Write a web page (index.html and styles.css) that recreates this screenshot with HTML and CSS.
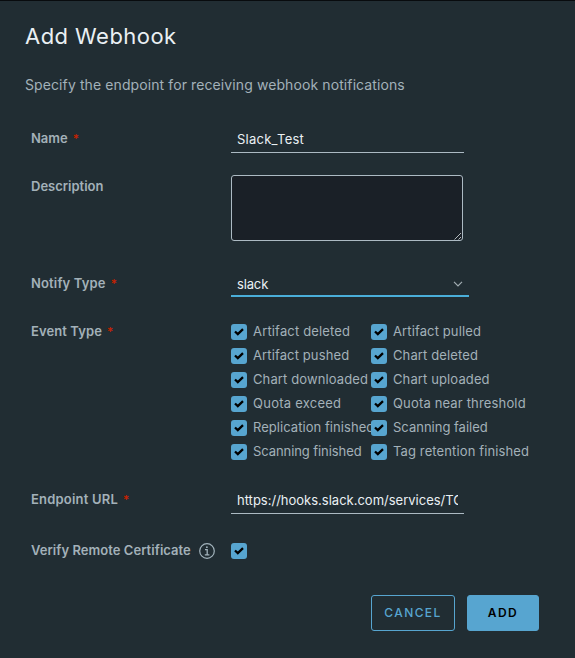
FILE: index.html
```html
<!DOCTYPE html>
<html lang="en">
<head>
<meta charset="utf-8">
<title>Add Webhook</title>
<link rel="stylesheet" href="styles.css">
</head>
<body>
<svg class="defs" width="0" height="0"><symbol id="tick" viewBox="0 0 16 16"><path d="M4 7.5 6.8 10.1 12 5.2" fill="none" stroke="#000" stroke-width="2.3"/></symbol></svg>
<main class="dialog">
  <h1><span class="title">Add Webhook</span></h1>
  <p class="intro"><span>Specify the endpoint for receiving webhook notifications</span></p>
  <form>
    <div class="row name-row">
      <div class="label"><span class="l-name">Name</span><i>*</i></div>
      <div class="input"><span class="v-name">Slack_Test</span></div>
    </div>
    <div class="row desc-row">
      <div class="label"><span class="l-desc">Description</span></div>
      <div class="textarea"><svg width="8" height="8" viewBox="0 0 8 8"><path d="M.5 7.5 7 1M4.5 7.5 7 5" stroke="#c4c9cc" stroke-width=".9"/></svg></div>
    </div>
    <div class="row notify-row">
      <div class="label"><span class="l-notify">Notify Type</span><i>*</i></div>
      <div class="select"><span class="v-slack">slack</span><svg width="10" height="6" viewBox="0 0 10 6"><path d="M1 .8 5 4.8 9 .8" fill="none" stroke="#a2adb2" stroke-width="1.2"/></svg></div>
    </div>
    <div class="row event-row">
      <div class="label"><span class="l-event">Event Type</span><i>*</i></div>
      <div class="events">
        <label><b><svg><use href="#tick"/></svg></b><span class="e1">Artifact deleted</span></label>
        <label><b><svg><use href="#tick"/></svg></b><span class="e2">Artifact pulled</span></label>
        <label><b><svg><use href="#tick"/></svg></b><span class="e3">Artifact pushed</span></label>
        <label><b><svg><use href="#tick"/></svg></b><span class="e4">Chart deleted</span></label>
        <label><b><svg><use href="#tick"/></svg></b><span class="e5">Chart downloaded</span></label>
        <label><b><svg><use href="#tick"/></svg></b><span class="e6">Chart uploaded</span></label>
        <label><b><svg><use href="#tick"/></svg></b><span class="e7">Quota exceed</span></label>
        <label><b><svg><use href="#tick"/></svg></b><span class="e8">Quota near threshold</span></label>
        <label><b><svg><use href="#tick"/></svg></b><span class="e9">Replication finished</span></label>
        <label><b><svg><use href="#tick"/></svg></b><span class="e10">Scanning failed</span></label>
        <label><b><svg><use href="#tick"/></svg></b><span class="e11">Scanning finished</span></label>
        <label><b><svg><use href="#tick"/></svg></b><span class="e12">Tag retention finished</span></label>
      </div>
    </div>
    <div class="row url-row">
      <div class="label"><span class="l-url">Endpoint URL</span><i>*</i></div>
      <div class="input"><span class="v-url">https://hooks.slack.com/services/TC</span></div>
    </div>
    <div class="row verify-row">
      <div class="label"><span class="l-verify">Verify Remote Certificate</span><svg class="info" viewBox="0 0 16 16" fill="none" stroke="#a2b3bc"><circle cx="8" cy="8" r="7.3" stroke-width="1.2"/><path d="M6 6.7h2.2v5M5.8 11.8h4.6" stroke-width="1.3"/><circle cx="7.9" cy="4.2" r=".9" fill="#a2b3bc" stroke="none"/></svg></div>
      <b><svg><use href="#tick"/></svg></b>
    </div>
    <div class="footer">
      <button type="button" class="cancel"><span>CANCEL</span></button>
      <button type="button" class="add"><span>ADD</span></button>
    </div>
  </form>
</main>
</body>
</html>
```
FILE: styles.css
```css
* { box-sizing: border-box; }
body { margin: 0; background: #212d33; color: #a3b1b9; font: 13px/24px Inter, "Liberation Sans", sans-serif; }
.defs { display: none; }
.dialog { height: 658px; padding: 19px 25px 0; border-top: 1px solid #080b0e; overflow: hidden; }
h1 { margin: 0; font-size: 22px; line-height: 32px; font-weight: 400; letter-spacing: .45px; color: #eaf0f3; white-space: nowrap; }
.intro { margin: 21px 0 32px; font-size: 14px; line-height: 24px; letter-spacing: .1px; white-space: nowrap; }
.row { display: grid; grid-template-columns: 200px 1fr; padding-left: 6px; align-items: start; }
.row > * { min-width: 0; }
.label { display: flex; align-items: center; height: 20px; font-weight: 600; white-space: nowrap; }
.label > span { padding-bottom: 2px; }
.label i { margin-left: 5px; font-style: normal; font-weight: 500; font-size: 12px; color: #c92100; }
.l-notify { letter-spacing: .15px; }
.l-event { letter-spacing: .1px; }
.l-url { letter-spacing: .2px; }
.l-verify { letter-spacing: .05px; }
.input { width: 233px; height: 24px; padding: 0 6px; border-bottom: 1px solid #acbac3; color: #eaf0f3; line-height: 21px; overflow: hidden; white-space: nowrap; }
.input span { display: block; overflow: hidden; }
.v-name { letter-spacing: .25px; }
.desc-row { margin-top: 22px; }
.desc-row .label { margin-top: 2px; }
.textarea { display: flex; align-items: flex-end; justify-content: flex-end; width: 232px; height: 66px; border: 1px solid #acbac3; border-radius: 3px; background: #1a2027; }
.notify-row { margin-top: 33px; }
.select { display: flex; justify-content: space-between; align-items: center; width: 238px; height: 23px; padding: 0 6px; border-bottom: 2px solid #4aaed9; color: #eaf0f3; line-height: 20px; }
.select span { padding-bottom: 2px; letter-spacing: -.15px; }
.select svg { margin-top: -2px; }
.event-row { margin-top: 27px; }
.event-row .label { margin-top: -2px; }
.events { display: grid; grid-template-columns: 140px 160px; grid-auto-rows: 24px; margin-top: -4px; }
.events label { display: flex; align-items: center; white-space: nowrap; }
.events span { padding-bottom: 2px; letter-spacing: .12px; }
.events .e1, .events .e8 { letter-spacing: .16px; }
.events .e7 { letter-spacing: .25px; }
.events .e9 { letter-spacing: .05px; }
.events .e10 { letter-spacing: 0; }
.events .e11 { letter-spacing: -.08px; }
b { display: block; flex: none; width: 16px; height: 16px; border-radius: 3px; background: #57a5d0; position: relative; }
b svg { display: block; width: 16px; height: 16px; }
.events b { margin-right: 6px; }
.url-row { margin-top: 26px; }
.verify-row { margin-top: 29px; }
.verify-row .label { height: 16px; }
.info { width: 16px; height: 16px; margin-left: 8px; }
.footer { display: flex; justify-content: flex-end; gap: 12px; margin: 36px 11px 0 0; }
button { height: 36px; padding: 0; border: 1px solid #57a5d0; border-radius: 3px; font: 500 12px/34px Inter, sans-serif; letter-spacing: 1.4px; }
.cancel { width: 84px; background: transparent; color: #57a5d0; }
.add { width: 72px; background: #57a5d0; color: #000; font-weight: 600; }
```
